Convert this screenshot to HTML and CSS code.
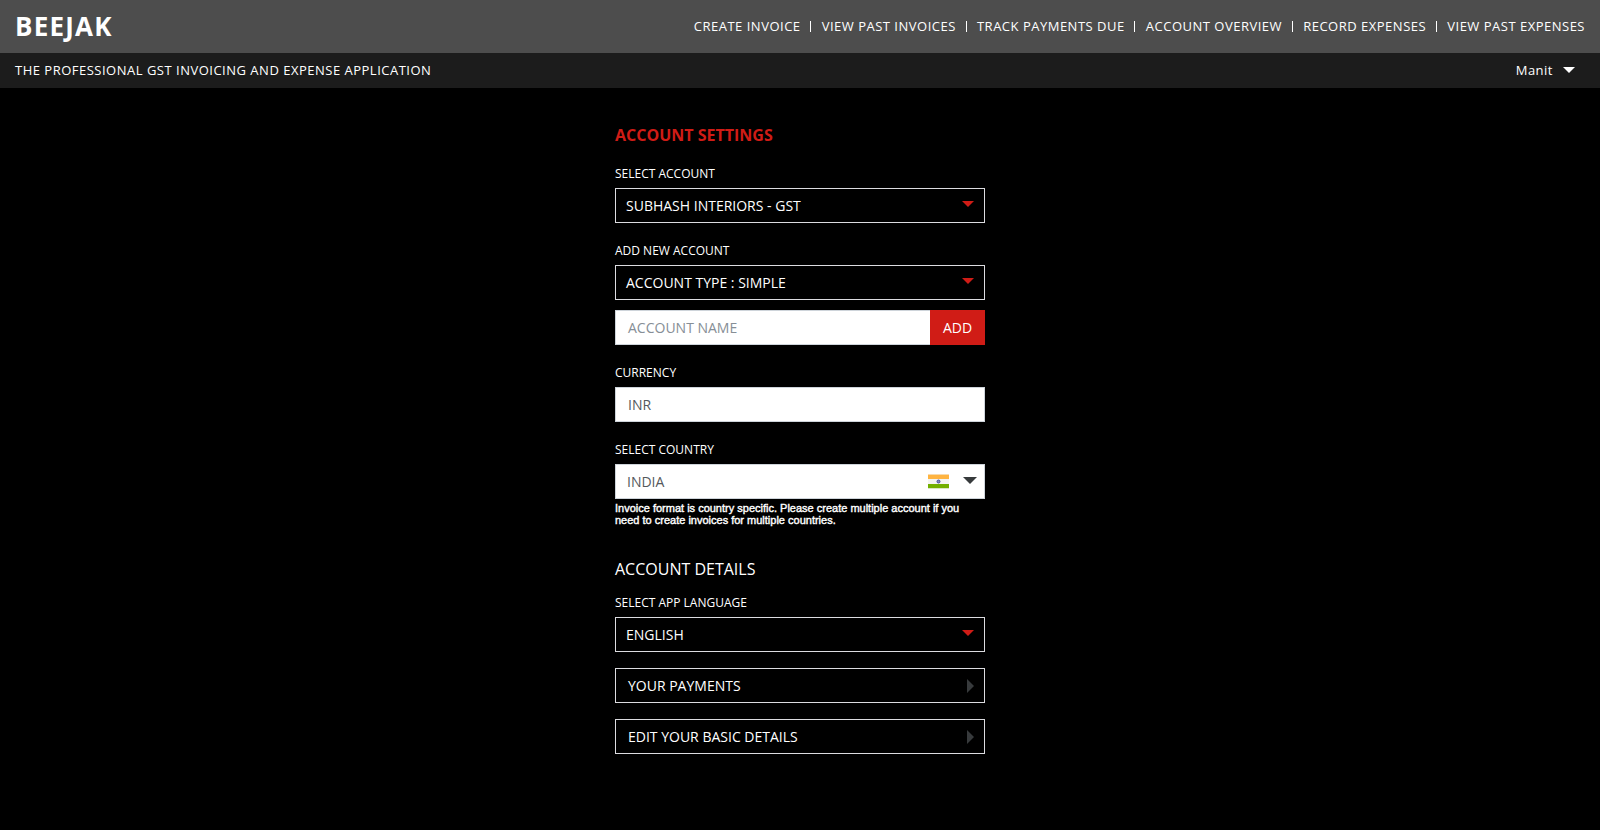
FILE: index.html
```
<!DOCTYPE html>
<html lang="en">
<head>
<meta charset="utf-8">
<title>Beejak</title>
<link rel="stylesheet" href="styles.css">
</head>
<body>
<header class="topbar">
  <h1 class="brand">BEEJAK</h1>
  <nav class="nav"><a>CREATE INVOICE</a><a>VIEW PAST INVOICES</a><a>TRACK PAYMENTS DUE</a><a>ACCOUNT OVERVIEW</a><a>RECORD EXPENSES</a><a>VIEW PAST EXPENSES</a></nav>
</header>
<div class="subbar">
  <span>THE PROFESSIONAL GST INVOICING AND EXPENSE APPLICATION</span>
  <div class="user"><span>Manit</span><svg width="12" height="6" viewBox="0 0 12 6"><path d="M0 0h12L6 6z" fill="#fff"/></svg></div>
</div>
<main class="settings">
  <h2 class="title">ACCOUNT SETTINGS</h2>
  <section class="field">
    <label class="label">SELECT ACCOUNT</label>
    <div class="box select"><span>SUBHASH INTERIORS - GST</span><svg class="caret" width="12" height="6" viewBox="0 0 12 6"><path d="M0 0h12L6 6z"/></svg></div>
  </section>
  <section class="field">
    <label class="label">ADD NEW ACCOUNT</label>
    <div class="box select"><span>ACCOUNT TYPE : SIMPLE</span><svg class="caret" width="12" height="6" viewBox="0 0 12 6"><path d="M0 0h12L6 6z"/></svg></div>
    <div class="add-row"><div class="box input placeholder">ACCOUNT NAME</div><button class="add">ADD</button></div>
  </section>
  <section class="field">
    <label class="label">CURRENCY</label>
    <div class="box input">INR</div>
  </section>
  <section class="field">
    <label class="label">SELECT COUNTRY</label>
    <div class="box input country"><span>INDIA</span>
      <svg class="flag" width="21" height="15" viewBox="0 0 21 15"><path d="M0 0h21v15H0z" fill="#f4f4f2"/><path d="M0 .6h21v4.4H0z" fill="#ffb441"/><path d="M0 10h21v4.2H0z" fill="#73af00"/><circle cx="10.5" cy="7.5" r="1.5" fill="#8a88c0" stroke="#41479b"/></svg>
      <svg class="country-caret" width="14" height="7" viewBox="0 0 14 7"><path d="M0 0h14L7 7z" fill="#373a3c"/></svg>
    </div>
    <p class="note">Invoice format is country specific. Please create multiple account if you need to create invoices for multiple countries.</p>
  </section>
  <h3 class="subtitle">ACCOUNT DETAILS</h3>
  <section class="field language">
    <label class="label">SELECT APP LANGUAGE</label>
    <div class="box select"><span>ENGLISH</span><svg class="caret" width="12" height="6" viewBox="0 0 12 6"><path d="M0 0h12L6 6z"/></svg></div>
  </section>
  <div class="box link"><span>YOUR PAYMENTS</span><svg width="7" height="14" viewBox="0 0 7 14"><path d="M0 0v14l7-7z" fill="#373a3c"/></svg></div>
  <div class="box link"><span>EDIT YOUR BASIC DETAILS</span><svg width="7" height="14" viewBox="0 0 7 14"><path d="M0 0v14l7-7z" fill="#373a3c"/></svg></div>
</main>
</body>
</html>
```
FILE: styles.css
```
* { box-sizing: border-box; }
body { margin: 0; min-height: 830px; background: #000; color: #fff; font-family: "Open Sans", sans-serif; font-size: 14px; }
h1, h2, h3, p { margin: 0; }
.topbar { display: flex; justify-content: space-between; align-items: center; height: 53px; padding: 0 15px; background: #4d4d4d; }
.brand { font-size: 26px; line-height: 53px; font-weight: 700; letter-spacing: 1.2px; }
.nav { display: flex; font-size: 13px; letter-spacing: 0.5px; line-height: 11px; }
.nav a + a { border-left: 1px solid #fff; margin-left: 9.7px; padding-left: 10.45px; }
.subbar { display: flex; justify-content: space-between; align-items: center; height: 35px; padding: 0 25px 1px 15px; background: #1c1c1c; font-size: 13px; letter-spacing: 0.5px; }
.user { display: flex; align-items: center; gap: 10px; }
.settings { width: 370px; margin: 0 auto; padding-top: 36px; }
.title { font-size: 16px; line-height: 22px; color: #d01c16; }
.label { display: block; height: 30px; padding-top: 8px; font-size: 12px; line-height: 16px; }
.field { margin-bottom: 12px; }
.title + .field { margin-top: 12px; }
.box { display: flex; align-items: center; justify-content: space-between; height: 35px; border: 1px solid #dcdce0; padding: 0 10px; }
.caret { fill: #d01c16; margin-top: -3px; }
.input { background: #fff; color: #55595c; padding: 0 12px; border-color: #ced4da; }
.placeholder { color: #868e96; flex: 1; border-right: 0; }
.add-row { display: flex; margin-top: 10px; }
.add { width: 55px; border: 0; padding: 0; background: #d01c16; color: #fff; font: inherit; }
.country { padding: 0 7px 0 11px; }
.flag { margin-left: auto; margin-right: 14px; }
.country-caret { margin-top: -2px; }
.note { font: 11px/12px "Liberation Sans", sans-serif; -webkit-text-stroke: 0.4px #fff; margin-top: 3px; }
.subtitle { font-size: 16px; font-weight: 400; line-height: 22px; margin-top: 32px; }
.language { margin: 7px 0 16px; }
.link { margin-top: 16px; padding: 0 10px 0 12px; }
```
